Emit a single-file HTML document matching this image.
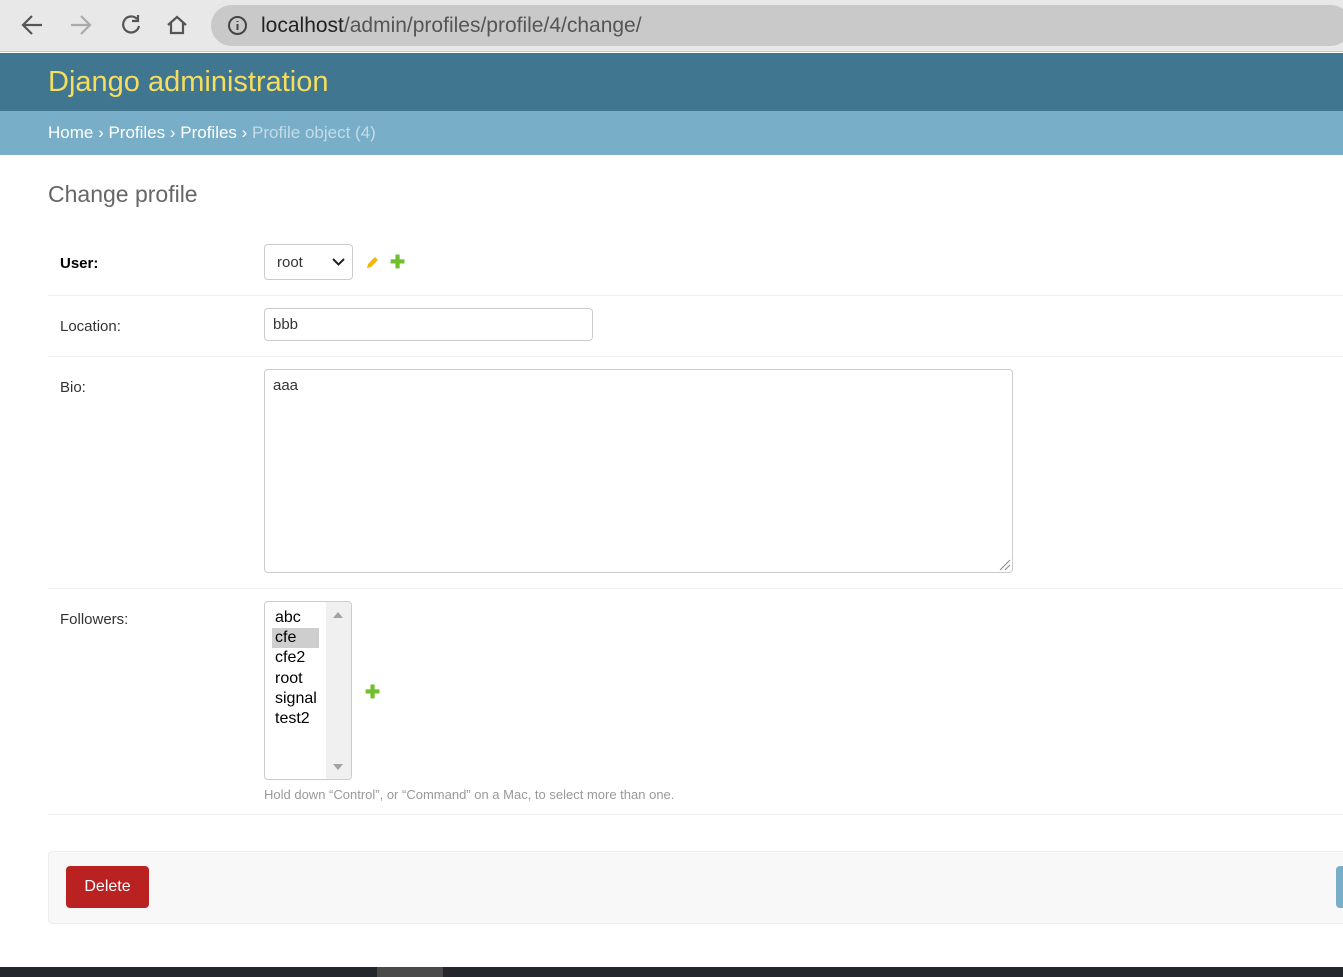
<!DOCTYPE html>
<html><head><meta charset="utf-8"><style>
*{box-sizing:border-box}
body{margin:0;width:1343px;height:977px;overflow:hidden;font-family:"Liberation Sans",sans-serif;background:#fff;position:relative}
.chrome{position:absolute;left:0;top:0;width:1343px;height:52px;background:#e8e8e8;border-bottom:1px solid #c8c8c8}
.url{position:absolute;left:211px;top:5px;width:1140px;height:41px;border-radius:21px;background:#c9c9c9}
.url span{position:absolute;left:50px;top:9px;font-size:21px;color:#555}
.url b{font-weight:normal;color:#222}
.hdr{position:absolute;top:53px;left:0;width:1343px;height:58px;background:#417690}
.hdr div{position:absolute;left:48px;top:13px;font-size:29px;color:#f5dd5d}
.bc{position:absolute;top:111px;left:0;width:1343px;height:44px;background:#79aec8;color:#fff;font-size:17px;padding:12px 48px}
.bc span{color:#c4dce8}
h1{position:absolute;left:48px;top:181px;margin:0;font-weight:300;font-size:23px;color:#666}
.lbl{position:absolute;left:60px;font-size:15px;color:#333}
.line{position:absolute;left:48px;width:1295px;height:1px;background:#eee}
.box{position:absolute;border:1px solid #ccc;border-radius:4px;background:#fff;font-size:15px;color:#333}
.plus{position:absolute;color:#70bf2b;font-weight:bold;font-size:18px}
</style></head><body>
<div class="chrome">
<svg style="position:absolute;left:20px;top:13px" width="180" height="26" fill="none" stroke-width="2.2">
<path d="M22 12H4M12 3L3 12l9 9" stroke="#555"/>
<path d="M51 12h18M61 3l9 9-9 9" stroke="#aaa"/>
<path d="M117 6a8 8 0 1 0 2 7M118 2v6h-6" stroke="#555"/>
<path d="M148 12l9-8 9 8M151 10v10h12V10" stroke="#555"/>
</svg>
<div class="url"><svg style="position:absolute;left:16px;top:10px" width="21" height="21" fill="none" stroke="#444" stroke-width="2"><circle cx="10.5" cy="10.5" r="8.5"/><path d="M10.5 9v6M10.5 6v1"/></svg><span><b>localhost</b>/admin/profiles/profile/4/change/</span></div>
</div>
<div class="hdr"><div>Django administration</div></div>
<div class="bc">Home › Profiles › Profiles › <span>Profile object (4)</span></div>
<h1>Change profile</h1>
<div class="lbl" style="top:255px;font-weight:bold;color:#000">User:</div>
<div class="box" style="left:264px;top:244px;width:89px;height:36px;padding:9px 12px">root<svg style="position:absolute;right:7px;top:13px" width="13" height="9" fill="none" stroke="#222" stroke-width="2"><path d="M1 1l5.5 5.5L12 1"/></svg></div>
<svg style="position:absolute;left:365px;top:256px" width="14" height="14"><path d="M2 12l1-4 7-7 3 3-7 7z" fill="#efb80b"/></svg>
<div class="plus" style="left:390px;top:252px">✚</div>
<div class="line" style="top:295px"></div>
<div class="lbl" style="top:318px">Location:</div>
<div class="box" style="left:264px;top:308px;width:329px;height:33px;padding:7px 8px">bbb</div>
<div class="line" style="top:356px"></div>
<div class="lbl" style="top:379px">Bio:</div>
<div class="box" style="left:264px;top:369px;width:749px;height:204px;padding:7px 8px">aaa<svg style="position:absolute;right:1px;bottom:1px" width="12" height="12" stroke="#888"><path d="M1 11L11 1M6 11l5-5"/></svg></div>
<div class="line" style="top:588px"></div>
<div class="lbl" style="top:611px">Followers:</div>
<div class="box" style="left:264px;top:601px;width:88px;height:179px;padding:6px 7px;font-size:16px;line-height:20.2px;color:#000;overflow:hidden">
<div style="position:absolute;right:0;top:0;width:25px;height:100%;background:#f0f0f0"></div>
<div style="position:absolute;right:8px;top:10px;border:5px solid transparent;border-bottom:6px solid #a3a3a3;border-top:0"></div>
<div style="position:absolute;right:8px;bottom:9px;border:5px solid transparent;border-top:6px solid #a3a3a3;border-bottom:0"></div>
<div style="padding-left:3px">abc</div><div style="padding-left:3px;background:#cecece;width:47px">cfe</div><div style="padding-left:3px">cfe2</div><div style="padding-left:3px">root</div><div style="padding-left:3px">signal</div><div style="padding-left:3px">test2</div></div>
<div class="plus" style="left:365px;top:682px">✚</div>
<div style="position:absolute;left:264px;top:787px;font-size:13px;color:#999">Hold down “Control”, or “Command” on a Mac, to select more than one.</div>
<div class="line" style="top:814px"></div>
<div style="position:absolute;left:48px;top:851px;width:1300px;height:73px;background:#f8f8f8;border:1px solid #eee;border-radius:4px"></div>
<div style="position:absolute;left:66px;top:866px;width:83px;height:42px;background:#ba2121;border-radius:4px;color:#fff;font-size:16px;text-align:center;line-height:42px">Delete</div>
<div style="position:absolute;left:1336px;top:866px;width:20px;height:42px;background:#79aec8;border-radius:4px"></div>
<div style="position:absolute;left:0;top:967px;width:1343px;height:10px;background:#23272b"></div>
<div style="position:absolute;left:377px;top:967px;width:66px;height:10px;background:#4a4a4a"></div>
</body></html>
